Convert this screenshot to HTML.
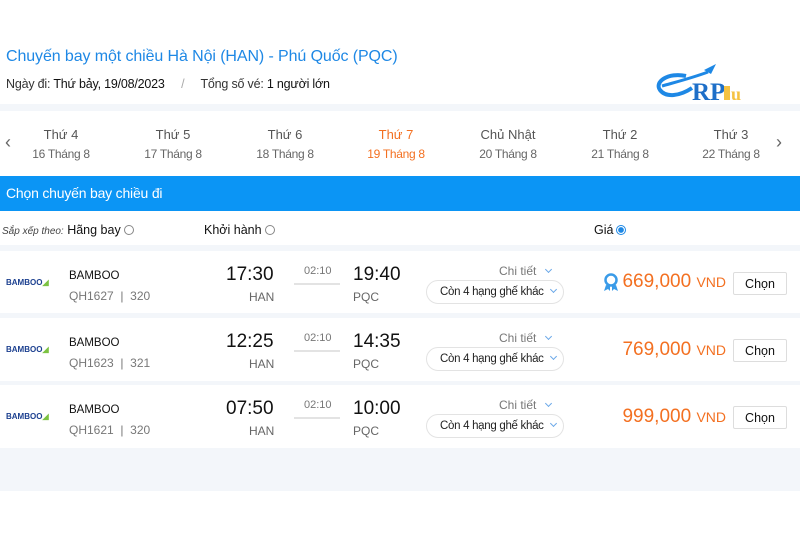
<!DOCTYPE html>
<html><head><meta charset="utf-8"><style>
*{margin:0;padding:0;box-sizing:border-box}
body{width:800px;height:533px;background:#fff;font-family:"Liberation Sans",sans-serif;position:relative;overflow:hidden;color:#222}
.a{position:absolute;white-space:nowrap}
.title{left:6px;top:48px;font-size:16px;color:#1e88e5;letter-spacing:-0.1px}
.sub{left:6px;top:77px;font-size:12.5px;color:#333;letter-spacing:-0.2px}
.sub b{font-weight:normal;color:#111}
.sep1{left:0;top:104px;width:800px;height:7px;background:#f3f6fa}
.day{top:127px;width:80px;text-align:center;font-size:13px;color:#555}
.day div:last-child{font-size:12px;color:#666;margin-top:5px;letter-spacing:-0.3px}
.day.on,.day.on div:last-child{color:#f37021}
.bar{left:0;top:176px;width:800px;height:35px;background:#0b95f5;color:#fff;font-size:14px;padding:9px 6px;letter-spacing:-0.2px}
.sort{top:223px;font-size:12.5px;color:#111}
.rad{display:inline-block;width:10px;height:10px;border:1px solid #888;border-radius:50%;vertical-align:-1px;margin-left:3px}
.rad.on{border-color:#1e88e5;background:radial-gradient(#1e88e5 45%,#fff 55%)}
.g{left:0;width:800px;background:#f3f6fa}
.bb{left:6px;font-size:8px;font-weight:bold;color:#1b3f8f}
.air{left:69px;font-size:11.5px;color:#111}
.code{left:69px;font-size:12px;color:#777}
.t{font-size:19px;color:#111}
.ap{font-size:12px;color:#666}
.dur{left:304px;font-size:11px;color:#777}
.arr{left:294px;width:46px;height:2px;background:#e3e3e3}
.ct{left:499px;font-size:12px;color:#777}
.chev{display:inline-block;width:5px;height:5px;border-right:1.3px solid #6aa8e8;border-bottom:1.3px solid #6aa8e8;transform:rotate(45deg);vertical-align:3px;margin-left:10px}
.pill{left:426px;width:138px;height:24px;border:1px solid #e3e3e3;border-radius:12px;font-size:11.5px;color:#222;padding:5px 0 0 13px;letter-spacing:-0.3px}
.price{font-size:19px;color:#f37021;right:74px;text-align:right}
.price span{font-size:14px}
.btn{left:733px;width:54px;height:23px;border:1px solid #ddd;border-radius:2px;font-size:12.5px;text-align:center;padding-top:4px;color:#111}
</style></head><body>
<div class="a title">Chuyến bay một chiều Hà Nội (HAN) - Phú Quốc (PQC)</div>
<div class="a sub">Ngày đi: <b>Thứ bảy, 19/08/2023</b> &nbsp; &nbsp; <span style="color:#aaa">/</span> &nbsp; &nbsp; Tổng số vé: <b>1 người lớn</b></div>
<svg class="a" style="left:654px;top:62px" width="125" height="42" viewBox="0 0 125 42">
<path d="M32 14 C14 10 0 20 6 28 C12 36 26 34 38 26" stroke="#1e88e5" stroke-width="4" fill="none"/>
<path d="M8 24 C22 20 38 16 54 10" stroke="#1e88e5" stroke-width="3" fill="none"/>
<path d="M50 8 L62 2 L57 12 Z" fill="#1e88e5"/>
<text x="38" y="38" font-family="Liberation Serif" font-weight="bold" font-size="25" fill="#1e6fc8">R</text>
<text x="56" y="38" font-family="Liberation Serif" font-weight="bold" font-size="25" fill="#1e6fc8">P</text>
<rect x="70" y="24" width="6" height="14" fill="#f5c242"/>
<text x="77" y="38" font-family="Liberation Serif" font-weight="bold" font-size="18" fill="#f5c242">u</text>
</svg>
<div class="a sep1"></div>
<div class="a" style="left:5px;top:132px;font-size:18px;color:#666">‹</div>
<div class="a" style="left:776px;top:132px;font-size:18px;color:#666">›</div>
<div class="a day" style="left:21px"><div>Thứ 4</div><div>16 Tháng 8</div></div>
<div class="a day" style="left:133px"><div>Thứ 5</div><div>17 Tháng 8</div></div>
<div class="a day" style="left:245px"><div>Thứ 6</div><div>18 Tháng 8</div></div>
<div class="a day on" style="left:356px"><div>Thứ 7</div><div>19 Tháng 8</div></div>
<div class="a day" style="left:468px"><div>Chủ Nhật</div><div>20 Tháng 8</div></div>
<div class="a day" style="left:580px"><div>Thứ 2</div><div>21 Tháng 8</div></div>
<div class="a day" style="left:691px"><div>Thứ 3</div><div>22 Tháng 8</div></div>
<div class="a bar">Chọn chuyến bay chiều đi</div>
<div class="a sort" style="left:2px"><i style="font-size:10px;color:#444">Sắp xếp theo:</i> Hãng bay<span class="rad"></span></div>
<div class="a sort" style="left:204px">Khởi hành<span class="rad"></span></div>
<div class="a sort" style="left:594px">Giá<span class="rad on"></span></div>
<div class="a g" style="top:245px;height:6px"></div>
<div class="a g" style="top:313px;height:5px"></div>
<div class="a g" style="top:381px;height:4px"></div>
<div class="a g" style="top:448px;height:43px"></div>

<div class="a bb" style="top:278px">BAMBOO<span style="color:#7cc242">◢</span></div>
<div class="a air" style="top:270px">BAMBOO</div>
<div class="a code" style="top:289px">QH1627 &nbsp;| &nbsp;320</div>
<div class="a t" style="left:226px;top:264px">17:30</div>
<div class="a ap" style="left:249px;top:290px">HAN</div>
<div class="a dur" style="top:265px">02:10</div>
<div class="a arr" style="top:283px"></div>
<div class="a t" style="left:353px;top:264px">19:40</div>
<div class="a ap" style="left:353px;top:290px">PQC</div>
<div class="a ct" style="top:264px">Chi tiết<span class="chev"></span></div>
<div class="a pill" style="top:280px">Còn 4 hạng ghế khác<span class="chev" style="margin-left:7px"></span></div>
<svg class="a" style="left:602px;top:272px" width="18" height="20" viewBox="0 0 18 20"><circle cx="9" cy="8" r="5.5" fill="none" stroke="#3a9be8" stroke-width="2.5"/><path d="M4 13 L2 19 L6 17 L8 19 L8 14 M14 13 L16 19 L12 17 L10 19 L10 14" fill="#3a9be8"/></svg>
<div class="a price" style="top:271px">669,000 <span>VND</span></div>
<div class="a btn" style="top:272px">Chọn</div>

<div class="a bb" style="top:345px">BAMBOO<span style="color:#7cc242">◢</span></div>
<div class="a air" style="top:337px">BAMBOO</div>
<div class="a code" style="top:356px">QH1623 &nbsp;| &nbsp;321</div>
<div class="a t" style="left:226px;top:331px">12:25</div>
<div class="a ap" style="left:249px;top:357px">HAN</div>
<div class="a dur" style="top:332px">02:10</div>
<div class="a arr" style="top:350px"></div>
<div class="a t" style="left:353px;top:331px">14:35</div>
<div class="a ap" style="left:353px;top:357px">PQC</div>
<div class="a ct" style="top:331px">Chi tiết<span class="chev"></span></div>
<div class="a pill" style="top:347px">Còn 4 hạng ghế khác<span class="chev" style="margin-left:7px"></span></div>
<div class="a price" style="top:339px">769,000 <span>VND</span></div>
<div class="a btn" style="top:339px">Chọn</div>

<div class="a bb" style="top:412px">BAMBOO<span style="color:#7cc242">◢</span></div>
<div class="a air" style="top:404px">BAMBOO</div>
<div class="a code" style="top:423px">QH1621 &nbsp;| &nbsp;320</div>
<div class="a t" style="left:226px;top:398px">07:50</div>
<div class="a ap" style="left:249px;top:424px">HAN</div>
<div class="a dur" style="top:399px">02:10</div>
<div class="a arr" style="top:417px"></div>
<div class="a t" style="left:353px;top:398px">10:00</div>
<div class="a ap" style="left:353px;top:424px">PQC</div>
<div class="a ct" style="top:398px">Chi tiết<span class="chev"></span></div>
<div class="a pill" style="top:414px">Còn 4 hạng ghế khác<span class="chev" style="margin-left:7px"></span></div>
<div class="a price" style="top:406px">999,000 <span>VND</span></div>
<div class="a btn" style="top:406px">Chọn</div>
</body></html>
